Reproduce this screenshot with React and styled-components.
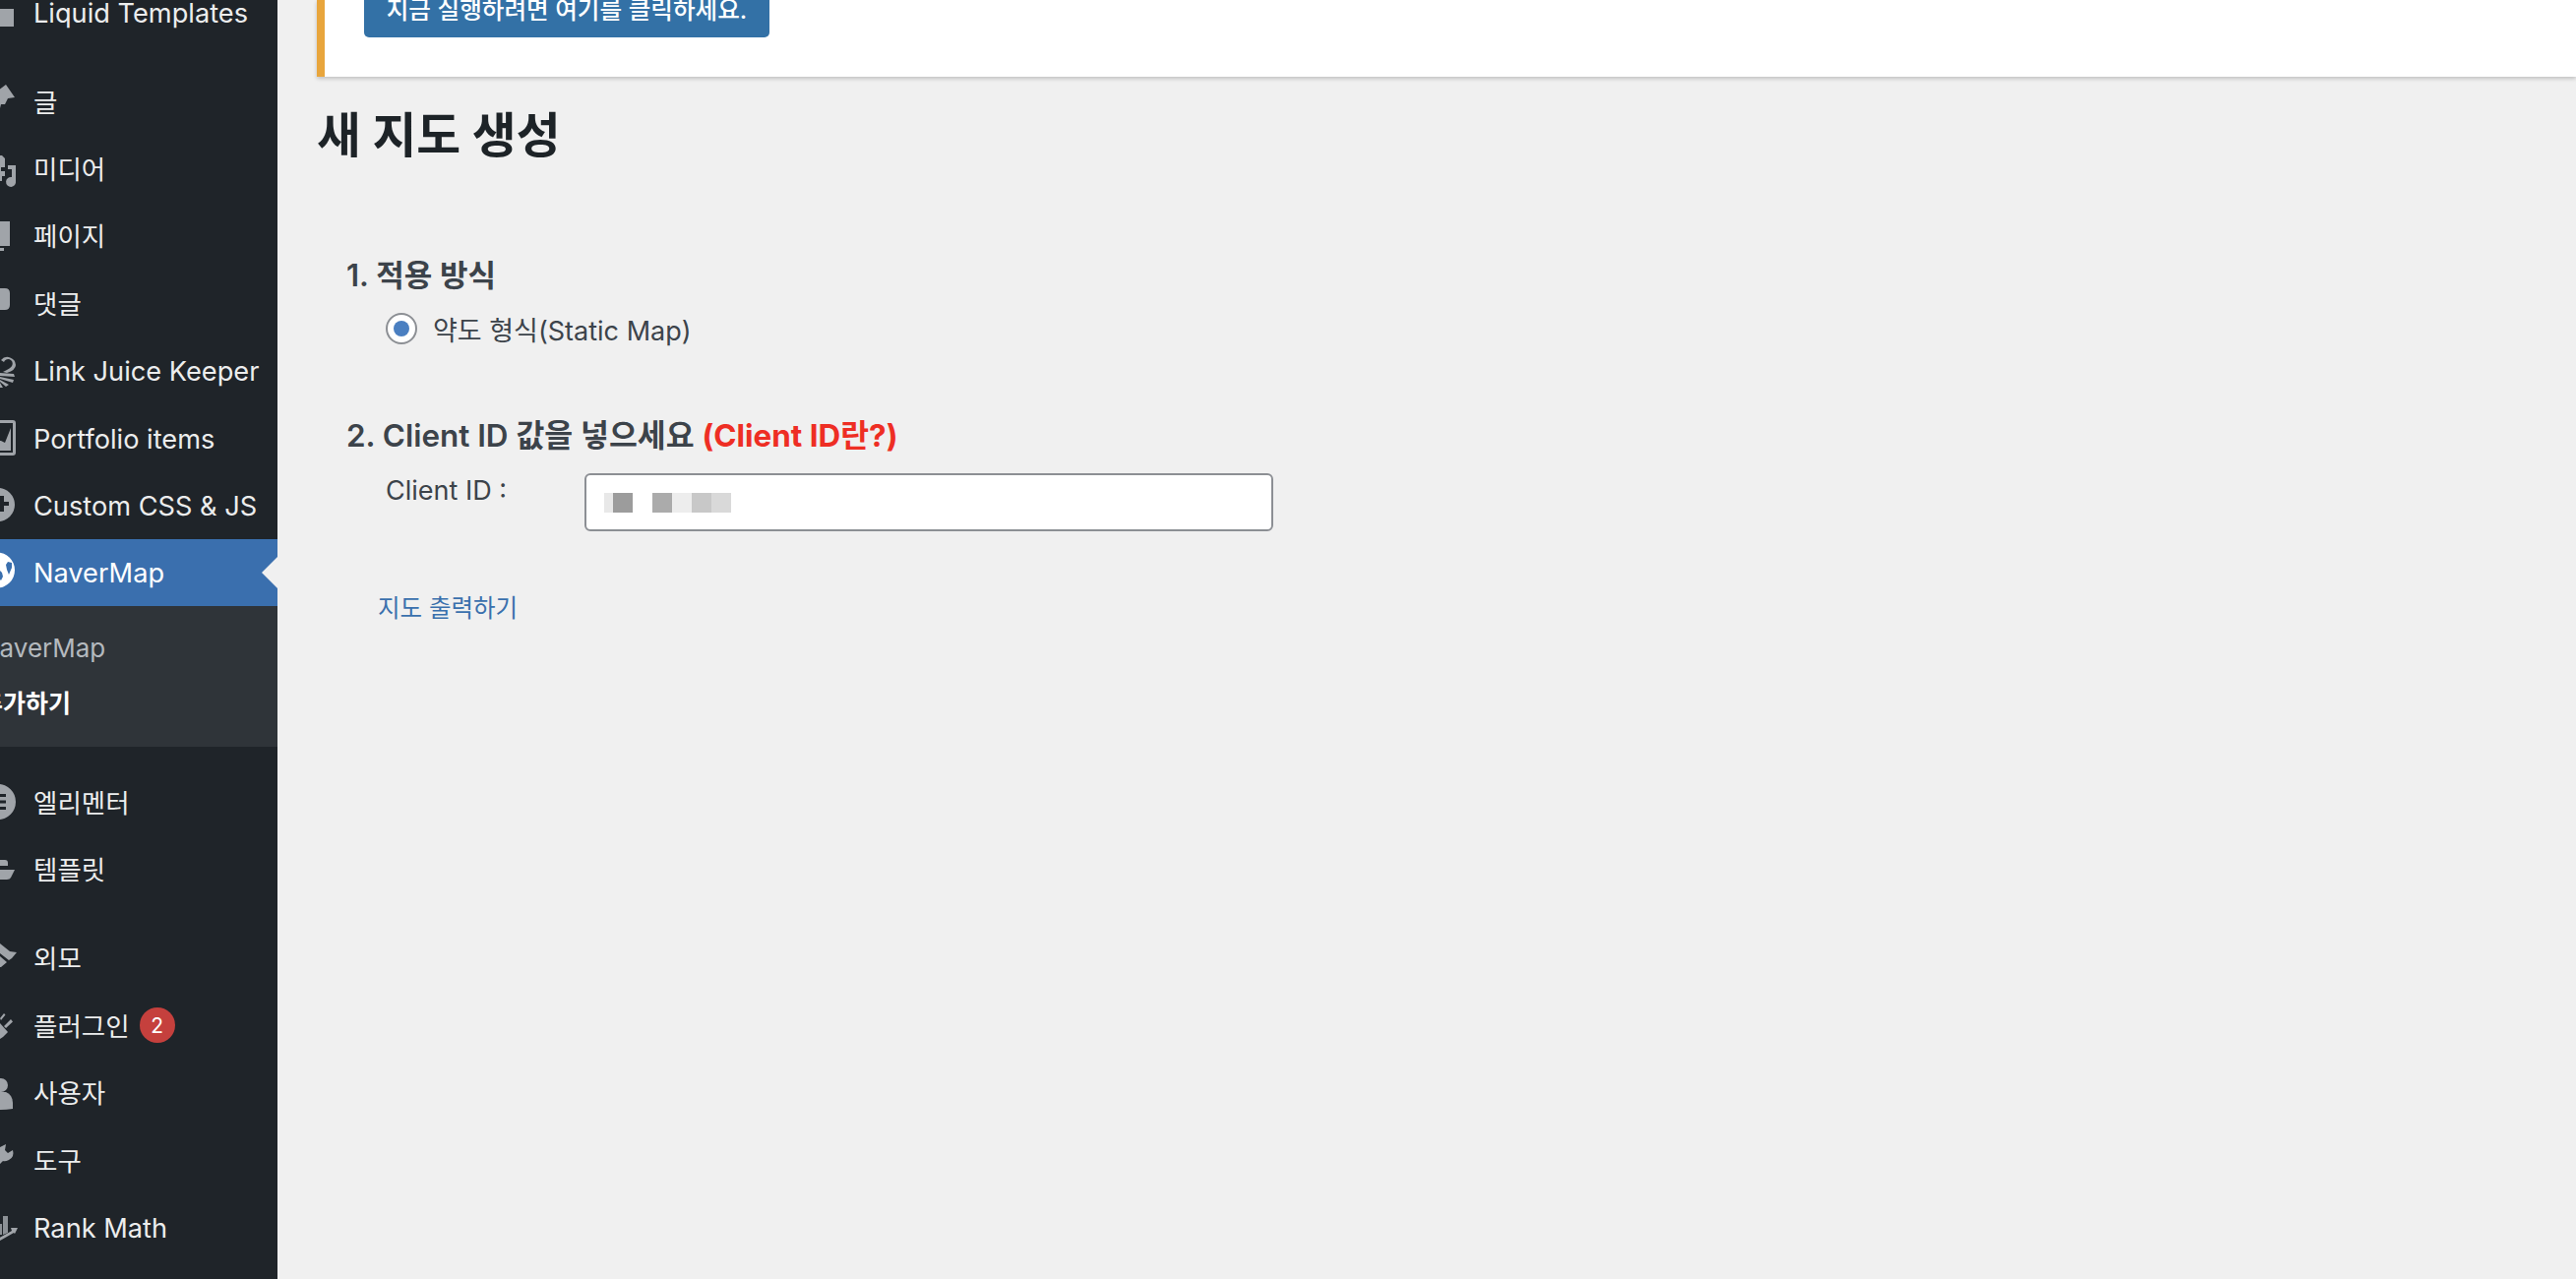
import React from 'react';
import styled, { createGlobalStyle } from 'styled-components';

const GlobalStyle = createGlobalStyle`
    html, body {
        margin: 0;
        padding: 0;
        height: 1300px;
        overflow: hidden;
        background: #f0f0f0;
    }
    * { box-sizing: border-box; }
    body {
        font-family: Inter, "Noto Sans CJK KR", "Noto Sans", sans-serif;
    }
`;

// icons use pixel coords relative to the row: x=0 is the screen edge, y=0 the row centre
const icons = {
    liquid: <rect x="-20" y="-4" width="34" height="18" />,
    post: <path d="M-6 -8L6 -17L15 -4L8 -3L5 3L1 3L-1 11L-6 11Z" />,
    media: (
        <>
            <path d="M-10 -13H2L5 -10V-1H1V3H5V8H2V13H-10Z" />
            <path d="M12 -3H16V13A5 5 0 1 1 12 9V1H8V-3Z" />
        </>
    ),
    page: <path d="M-20 -15H10V10H-20ZM-20 12H4V15H-20Z" />,
    comment: <path d="M-20 -15H5Q10 -15 10 -10V2Q10 7 5 7H0L-6 12V7H-20Z" />,
    link: (
        <>
            <path d="M1 -11A8.500 8.500 0 0 1 16 -6Q16 -1 7 2L3 1Q12 -3 12.500 -6A4.500 4.500 0 0 0 4 -9Z" />
            <path d="M0 2L14 3L15 6L0 5ZM0 6L14 9L13 12L0 8ZM0 9L9 14L6 16L0 11ZM0 12L3 17H0Z" />
        </>
    ),
    portfolio: (
        <>
            <path fillRule="evenodd" d="M-20 -18H13Q16 -18 16 -15V15Q16 18 13 18H-20ZM-16 -15V15H13V-15Z" />
            <path d="M-16 3H1L5 5L11 -10V13H-16Z" />
        </>
    ),
    custom: <path fillRule="evenodd" d="M-2 -17A17 17 0 1 1 -2 17A17 17 0 1 1 -2 -17ZM-6 -3H0V-9H4V-3H9V1H4V7H0V1H-6Z" />,
    wordpress: (
        <path fillRule="evenodd" d="M-3 -20.500A18 18 0 1 1 -3 15.500A18 18 0 1 1 -3 -20.500ZM8 -11L12 -10L12 -5L9 2L7 -3L6 -8ZM-1 -3L2 0L3 4L1 8L-1 6Z" />
    ),
    elementor: <path fillRule="evenodd" d="M-2 -18A18 18 0 1 1 -2 18A18 18 0 1 1 -2 -18ZM-3 -8H6V-5H-3ZM-3 -1.500H6V1.500H-3ZM-3 5H6V8H-3Z" />,
    template: <path d="M-6 -10H5Q8 -10 8 -7V-4H-6ZM-6 0H15L11 8Q10 10 7 10H-6Z" />,
    brush: <path d="M0 -15L10 -7L17 -6L12 0L9 2L0 -5ZM0 -2L7 4L1 9H0Z" />,
    plugin: <path d="M0 -7L4 -12L5.500 -10.500L1 -5ZM11 -6L13 -3.500L6 3L4 1ZM-2 -2H0L8 7L3 12L0 14H-2Z" />,
    user: (
        <>
            <circle cx="1" cy="-8" r="7" />
            <path d="M-10 -1H6Q13 2 13 10V16Q0 18 -10 16Z" />
        </>
    ),
    tool: <path d="M0 -13L6 -16L5 -10L8 -7L13 -10Q15 -3 9 0Q5 2 3 1L0 4Z" />,
    rankmath: (
        <>
            <path d="M-4 -4H2V7H-4ZM3 -12H8V5L3 7Z" opacity="0.85" />
            <path d="M-2 11L12 3L11 0H18L15 6L14 5L0 13Z" />
        </>
    ),
};

const menuTop = [
    { icon: 'post', label: '글' },
    { icon: 'media', label: '미디어' },
    { icon: 'page', label: '페이지' },
    { icon: 'comment', label: '댓글' },
    { icon: 'link', label: 'Link Juice Keeper' },
    { icon: 'portfolio', label: 'Portfolio items' },
    { icon: 'custom', label: 'Custom CSS & JS' },
];

const menuBottom = [
    { icon: 'brush', label: '외모' },
    { icon: 'plugin', label: '플러그인', badge: 2 },
    { icon: 'user', label: '사용자' },
    { icon: 'tool', label: '도구' },
    { icon: 'rankmath', label: 'Rank Math' },
];

function MenuRow({ icon, label, badge, active }) {
    const korean = /[가-힣]/.test(label);
    return (
        <Row $active={active}>
            <IconSvg viewBox="-24 -20 40 40" $active={active}>{icons[icon]}</IconSvg>
            <RowLabel $korean={korean}>{label}</RowLabel>
            {badge ? <Badge>{badge}</Badge> : null}
            {active ? <ActiveArrow /> : null}
        </Row>
    );
}

export default function App() {
    return (
        <Page>
            <GlobalStyle />
            <Sidebar>
                <MenuGroup $first>
                    <MenuRow icon="liquid" label="Liquid Templates" />
                </MenuGroup>
                <MenuGroup>
                    {menuTop.map((item) => <MenuRow key={item.label} {...item} />)}
                    <MenuRow icon="wordpress" label="NaverMap" active />
                    <SubMenu>
                        <SubItem>NaverMap</SubItem>
                        <SubItem $current>추가하기</SubItem>
                    </SubMenu>
                </MenuGroup>
                <MenuGroup>
                    <MenuRow icon="elementor" label="엘리멘터" />
                    <MenuRow icon="template" label="템플릿" />
                </MenuGroup>
                <MenuGroup>
                    {menuBottom.map((item) => <MenuRow key={item.label} {...item} />)}
                </MenuGroup>
            </Sidebar>
            <Main>
                <Notice>
                    <NoticeButton>지금 실행하려면 여기를 클릭하세요.</NoticeButton>
                </Notice>
                <Title>새 지도 생성</Title>
                <Form>
                    <SectionTitle>1. 적용 방식</SectionTitle>
                    <RadioRow>
                        <RadioDot />
                        <RadioLabel>약도 형식(Static Map)</RadioLabel>
                    </RadioRow>
                    <SectionTitle $second>
                        2. Client ID 값을 넣으세요 <HelpLink>(Client ID란?)</HelpLink>
                    </SectionTitle>
                    <FieldRow>
                        <FieldLabel>Client ID :</FieldLabel>
                        <FieldInput>
                            <Mosaic>
                                <MosaicBlock $w={9} $c="#e8e8e8" />
                                <MosaicBlock $w={20} $c="#9c9c9c" />
                                <MosaicBlock $w={20} $c="transparent" />
                                <MosaicBlock $w={20} $c="#ababab" />
                                <MosaicBlock $w={20} $c="#ededed" />
                                <MosaicBlock $w={20} $c="#c8c8c8" />
                                <MosaicBlock $w={20} $c="#d9d9d9" />
                            </Mosaic>
                        </FieldInput>
                    </FieldRow>
                    <SubmitLink>지도 출력하기</SubmitLink>
                </Form>
            </Main>
        </Page>
    );
}

const Page = styled.div`
    display: flex;
    width: 2618px;
    height: 1300px;
    overflow: hidden;
    background: #f0f0f0;
`;

const Sidebar = styled.nav`
    flex: 0 0 282px;
    height: 1300px;
    overflow: hidden;
    background: #1f2429;
    color: #f0f0f1;
`;

const MenuGroup = styled.div`
    margin-top: ${(props) => (props.$first ? '-21.500px' : '22px')};
`;

const Row = styled.div`
    position: relative;
    display: flex;
    align-items: center;
    height: 68.4px;
    padding-left: 34px;
    color: ${(props) => (props.$active ? '#fff' : '#eceded')};
    background: ${(props) => (props.$active ? '#3a6fae' : 'transparent')};
`;

const IconSvg = styled.svg`
    position: absolute;
    left: -24px;
    top: 50%;
    width: 40px;
    height: 40px;
    margin-top: -20px;
    overflow: visible;
    fill: ${(props) => (props.$active ? '#fff' : '#a0a4a9')};
`;

const RowLabel = styled.span`
    white-space: nowrap;
    font-size: ${(props) => (props.$korean ? '26.500px' : '27.200px')};
    padding: ${(props) => (props.$korean ? '0 0 2px' : '2px 0 0')};
`;

const Badge = styled.span`
    display: flex;
    align-items: center;
    justify-content: center;
    width: 36px;
    height: 36px;
    margin-left: 10px;
    border-radius: 50%;
    background: #c5403d;
    color: #fff;
    font-size: 21px;
`;

const ActiveArrow = styled.span`
    position: absolute;
    right: 0;
    top: 50%;
    margin-top: -16px;
    border-style: solid;
    border-width: 16px 16px 16px 0;
    border-color: transparent #f0f0f0 transparent transparent;
`;

const SubMenu = styled.div`
    display: flex;
    flex-direction: column;
    gap: 14px;
    height: 143px;
    padding-top: 21px;
    margin-left: -20px;
    background: #2f3439;
    overflow: hidden;
`;

const SubItem = styled.div`
    height: 43px;
    line-height: 43px;
    font-size: ${(props) => (props.$current ? '25px' : '26px')};
    white-space: nowrap;
    color: ${(props) => (props.$current ? '#fff' : '#b4b9be')};
    font-weight: ${(props) => (props.$current ? 600 : 400)};
`;

const Main = styled.main`
    flex: 1;
    min-width: 0;
    padding-left: 40px;
`;

const Notice = styled.div`
    display: flex;
    align-items: flex-end;
    height: 78px;
    padding: 0 0 40px 40px;
    background: #fff;
    border-left: 8px solid #e8a53c;
    box-shadow: 0 2px 4px rgba(0, 0, 0, 0.2);
`;

const NoticeButton = styled.div`
    display: flex;
    align-items: center;
    justify-content: center;
    flex: 0 0 412px;
    height: 60px;
    border-radius: 5px;
    background: #3371a6;
    color: #fff;
    font-size: 24.600px;
    font-weight: 500;
`;

const Title = styled.h1`
    margin: 32px 0 0;
    height: 56px;
    line-height: 56px;
    font-size: 48.800px;
    font-weight: 700;
    color: #1d2327;
`;

const Form = styled.div`
    padding-left: 30px;
    margin-top: 94px;
    color: #3c434a;
`;

const SectionTitle = styled.div`
    height: 40px;
    line-height: 40px;
    margin-top: ${(props) => (props.$second ? '69px' : '0')};
    font-size: ${(props) => (props.$second ? '31.400px' : '31px')};
    font-weight: 600;
`;

const HelpLink = styled.span`
    color: #ee2e24;
    font-weight: 700;
`;

const RadioRow = styled.div`
    display: flex;
    align-items: center;
    gap: 16px;
    height: 40px;
    margin: 14px 0 0 40px;
`;

const RadioDot = styled.span`
    position: relative;
    width: 32px;
    height: 32px;
    border: 2px solid #8c8f94;
    border-radius: 50%;
    background: #fff;
    &::after {
        content: '';
        position: absolute;
        inset: 6px;
        border-radius: 50%;
        background: #4a7fc1;
    }
`;

const RadioLabel = styled.span`
    font-size: 27px;
    white-space: nowrap;
`;

const FieldRow = styled.div`
    display: flex;
    align-items: flex-start;
    margin: 18px 0 0 40px;
`;

const FieldLabel = styled.div`
    width: 202px;
    line-height: 36px;
    font-size: 27px;
`;

const FieldInput = styled.div`
    display: flex;
    align-items: center;
    width: 700px;
    height: 59px;
    padding-left: 18px;
    border: 2px solid #8c8f94;
    border-radius: 6px;
    background: #fff;
`;

const Mosaic = styled.div`
    display: flex;
    height: 20px;
`;

const MosaicBlock = styled.span`
    width: ${(props) => props.$w}px;
    background: ${(props) => props.$c};
`;

const SubmitLink = styled.div`
    margin: 58px 0 0 32px;
    line-height: 40px;
    font-size: 24.500px;
    color: #3a70ad;
`;
